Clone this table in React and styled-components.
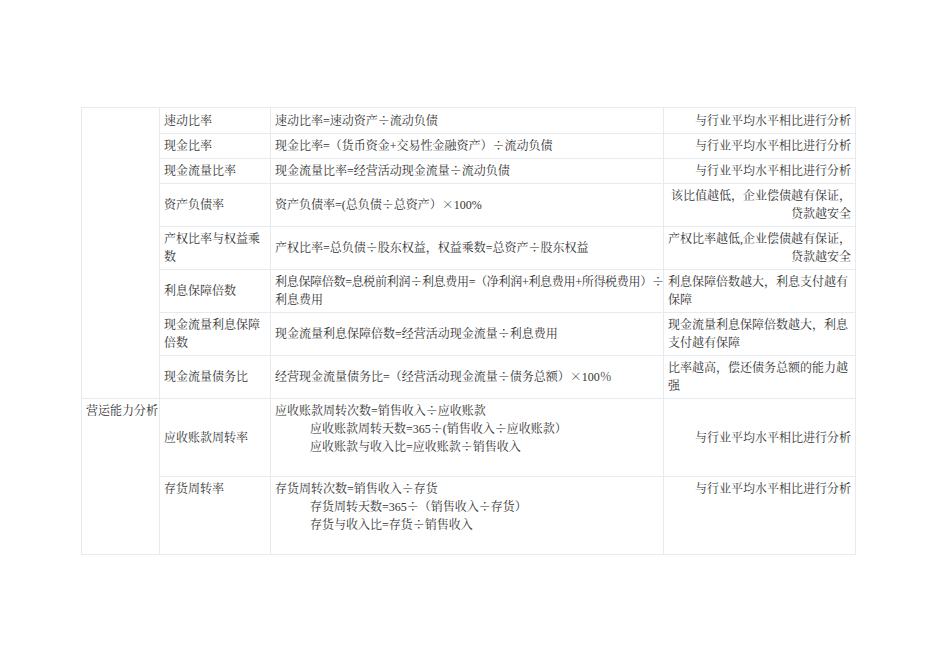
import styled, { createGlobalStyle } from 'styled-components';

const GlobalStyle = createGlobalStyle`
  html, body {
    margin: 0;
    padding: 0;
    background: #ffffff;
  }
  body {
    font-family: "Liberation Serif", "Noto Serif CJK SC", "Noto Sans CJK SC", serif;
    color: #333333;
  }
`;

const Page = styled.div`
  width: 950px;
  height: 672px;
  padding: 107px 0 0 81px;
  box-sizing: border-box;
`;

const Table = styled.table`
  border-collapse: collapse;
  table-layout: fixed;
  width: 774px;
  font-size: 12px;
  line-height: 18px;
`;

const Row = styled.tr`
  height: ${(p) => p.$h}px;
`;

const Cell = styled.td`
  border: 1px solid #e6ebf1;
  padding: 3px 4px;
  vertical-align: ${(p) => (p.$top ? 'top' : 'middle')};
  text-align: ${(p) => (p.$right ? 'right' : 'left')};
  box-sizing: border-box;
  white-space: ${(p) => (p.$nowrap ? 'nowrap' : 'normal')};
`;

const Line = styled.div`
  padding-left: ${(p) => (p.$indent ? '35px' : '0')};
  white-space: nowrap;
  height: 18px;
  letter-spacing: ${(p) => (p.$tight ? '-0.3px' : 'normal')};
`;

// ÷ and × are full-width in the original, so set them in the CJK face
const Sym = styled.span`
  font-family: "Noto Serif CJK SC", "Noto Sans CJK SC", sans-serif;
  line-height: 1;
`;

const NOTE = '与行业平均水平相比进行分析';

const rows = [
  { h: 26, name: '速动比率', formula: ['速动比率=速动资产÷流动负债'], note: [NOTE], right: true },
  { h: 25, name: '现金比率', formula: ['现金比率=（货币资金+交易性金融资产）÷流动负债'], note: [NOTE], right: true },
  { h: 25, name: '现金流量比率', formula: ['现金流量比率=经营活动现金流量÷流动负债'], note: [NOTE], right: true },
  { h: 42, name: '资产负债率', formula: ['资产负债率=(总负债÷总资产）×100%'], note: ['该比值越低，企业偿债越有保证，', '贷款越安全'], right: true },
  { h: 43, name: ['产权比率与权益乘', '数'], formula: ['产权比率=总负债÷股东权益，权益乘数=总资产÷股东权益'], note: ['产权比率越低,企业偿债越有保证，', '贷款越安全'], right: true },
  { h: 43, name: '利息保障倍数', formula: ['利息保障倍数=息税前利润÷利息费用=（净利润+利息费用+所得税费用）÷', '利息费用'], note: ['利息保障倍数越大，利息支付越有', '保障'], tight: true },
  { h: 43, name: ['现金流量利息保障', '倍数'], formula: ['现金流量利息保障倍数=经营活动现金流量÷利息费用'], note: ['现金流量利息保障倍数越大，利息', '支付越有保障'] },
  { h: 43, name: '现金流量债务比', formula: ['经营现金流量债务比=（经营活动现金流量÷债务总额）×100％'], note: ['比率越高，偿还债务总额的能力越', '强'] },
];

const text = (t) =>
  t.split(/([÷×])/).map((part, i) => (part === '÷' || part === '×' ? <Sym key={i}>{part}</Sym> : part));

const lines = (v, tight) =>
  (Array.isArray(v) ? v : [v]).map((t, i) => (
    <Line key={i} $tight={tight && i === 0}>
      {text(t)}
    </Line>
  ));

export default function App() {
  return (
    <Page>
      <GlobalStyle />
      <Table>
        <colgroup>
          <col style={{ width: 78 }} />
          <col style={{ width: 111 }} />
          <col style={{ width: 393 }} />
          <col style={{ width: 192 }} />
        </colgroup>
        <tbody>
          {rows.map((r, i) => (
            <Row key={i} $h={r.h}>
              {i === 0 && <Cell rowSpan={8} />}
              <Cell>{lines(r.name)}</Cell>
              <Cell>{lines(r.formula, r.tight)}</Cell>
              <Cell $right={r.right}>{lines(r.note)}</Cell>
            </Row>
          ))}
          <Row $h={78}>
            <Cell rowSpan={2} $top $nowrap>营运能力分析</Cell>
            <Cell>应收账款周转率</Cell>
            <Cell $top>
              <Line>{text('应收账款周转次数=销售收入÷应收账款')}</Line>
              <Line $indent>{text('应收账款周转天数=365÷(销售收入÷应收账款）')}</Line>
              <Line $indent>{text('应收账款与收入比=应收账款÷销售收入')}</Line>
            </Cell>
            <Cell $right>{NOTE}</Cell>
          </Row>
          <Row $h={78}>
            <Cell $top>存货周转率</Cell>
            <Cell $top>
              <Line>{text('存货周转次数=销售收入÷存货')}</Line>
              <Line $indent>{text('存货周转天数=365÷（销售收入÷存货）')}</Line>
              <Line $indent>{text('存货与收入比=存货÷销售收入')}</Line>
            </Cell>
            <Cell $top $right>{NOTE}</Cell>
          </Row>
        </tbody>
      </Table>
    </Page>
  );
}
